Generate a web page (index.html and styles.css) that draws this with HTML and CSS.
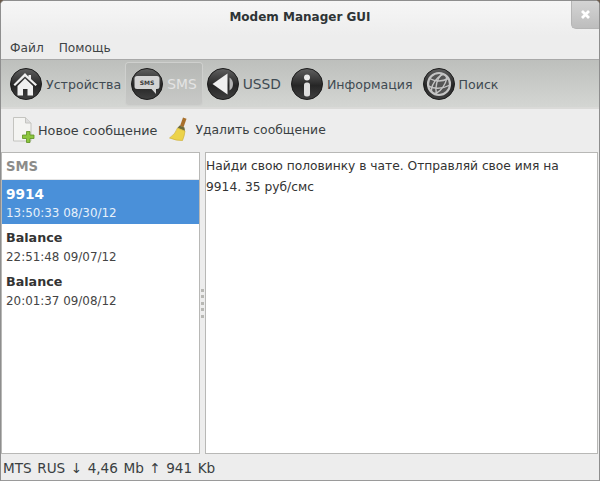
FILE: index.html
```html
<!DOCTYPE html>
<html lang="ru">
<head>
<meta charset="utf-8">
<title>Modem Manager GUI</title>
<link rel="stylesheet" href="styles.css">
</head>
<body>
<div class="window">
  <header class="titlebar">
    <div class="title">Modem Manager GUI</div>
    <div class="close"><svg width="11" height="11" viewBox="0 0 11 11"><path d="M2 2l7 7M9 2l-7 7" stroke="#fff" stroke-width="2.800"/></svg></div>
  </header>
  <nav class="menubar"><span>Файл</span><span>Помощь</span></nav>
  <div class="modes">
    <div class="mode">
      <svg class="ball" viewBox="0 0 32 32"><use href="#disc"/><path d="M15 5L3.500 16.500l1.500 1.500L15 8.500 25.500 18l1.500-1.500L21 11V7h-2.500v1.800z" fill="#f0f0f0"/><path d="M15 10.500L7.500 18v9.500h5.500V21h4.500v6.500H23V18z" fill="#f0f0f0"/></svg>
      <span>Устройства</span>
    </div>
    <div class="mode active">
      <svg class="ball" viewBox="0 0 32 32"><use href="#disc"/><path d="M6 8h20a2.500 2.500 0 0 1 2.500 2.500v8A2.500 2.500 0 0 1 26 21h-1v5l-4.500-5H6a2.500 2.500 0 0 1-2.500-2.500v-8A2.500 2.500 0 0 1 6 8z" fill="#d4d4d4"/><text x="16" y="17" class="smsmark">SMS</text></svg>
      <span>SMS</span>
    </div>
    <div class="mode">
      <svg class="ball" viewBox="0 0 32 32"><use href="#disc"/><path d="M5.500 16L20.500 5.500v21z" fill="#f0f0f0"/><path d="M22.500 9.500q3.500 2 3.500 6.500t-3.500 6.500z" fill="#b4b4b4"/></svg>
      <span>USSD</span>
    </div>
    <div class="mode">
      <svg class="ball" viewBox="0 0 32 32"><use href="#disc"/><circle cx="16" cy="9.500" r="3" fill="#ececec"/><rect x="13" y="14.500" width="6" height="14" rx="2.500" fill="#dedede"/></svg>
      <span>Информация</span>
    </div>
    <div class="mode">
      <svg class="ball" viewBox="0 0 32 32"><use href="#disc"/><circle cx="16" cy="16" r="11" fill="#555" stroke="#c4c4c4" stroke-width="2.200"/><g fill="none" stroke="#c4c4c4" stroke-width="1.400"><ellipse cx="16" cy="16" rx="5" ry="11" transform="rotate(35 16 16)"/><path d="M6.500 10.500q9 5 19 0M5 18q11 5 22-1M19 5.500q-8 9-5.500 21"/></g></svg>
      <span>Поиск</span>
    </div>
  </div>
  <div class="actions">
    <div class="action new">
      <svg width="22" height="26" viewBox="0 0 22 26"><path d="M.5.500h12l5.500 5.500v18H.5z" fill="#f4f4f2" stroke="#c4c4c0"/><path d="M12.500.500V6H18" fill="#ddd" stroke="#c4c4c0"/><path d="M13.500 14.500h3.500v3.500h4v3.500h-4v4h-3.500v-4h-4V18h4z" fill="#8cc63e" stroke="#5d8f22" stroke-width=".8"/></svg>
      <span>Новое сообщение</span>
    </div>
    <div class="action del">
      <svg width="22" height="26" viewBox="0 0 22 26"><path d="M15 .500l3.500 1.300-3 8.500-3.500-1.300z" fill="#a8702c"/><path d="M11.500 8.500l5 2 .5 3.500-7.500-3z" fill="#6e6a3a"/><path d="M9.500 11l7.500 3q-.5 5-2.500 9.500-5.500.5-13-2.500 6-4 8-10z" fill="#ecd34a" stroke="#c9a92a" stroke-width=".6"/></svg>
      <span>Удалить сообщение</span>
    </div>
  </div>
  <main class="panes">
    <section class="list">
      <div class="list-head">SMS</div>
      <div class="row selected"><b class="big">9914</b><small>13:50:33 08/30/12</small></div>
      <div class="row"><b>Balance</b><small>22:51:48 09/07/12</small></div>
      <div class="row"><b>Balance</b><small>20:01:37 09/08/12</small></div>
    </section>
    <div class="grip"><i></i><i></i><i></i><i></i><i></i></div>
    <section class="message">Найди свою половинку в чате. Отправляй свое имя на<br>9914. 35 руб/смс</section>
  </main>
  <footer class="status">MTS RUS ↓ 4,46 Mb ↑ 941 Kb</footer>
</div>
<svg class="defs" width="0" height="0"><defs>
  <linearGradient id="discfill" x1="0" y1="0" x2="0" y2="1"><stop offset="0" stop-color="#606060"/><stop offset=".55" stop-color="#262626"/><stop offset="1" stop-color="#404040"/></linearGradient>
  <symbol id="disc" viewBox="0 0 32 32"><circle cx="16" cy="16" r="15.500" fill="url(#discfill)" stroke="#1c1c1c"/></symbol>
</defs></svg>
</body>
</html>
```
FILE: styles.css
```css
* { box-sizing: border-box; }
html, body { margin: 0; padding: 0; }
body { width: 600px; height: 481px; overflow: hidden; background: #6b5a4a; font-family: "DejaVu Sans", sans-serif; font-size: 12px; color: #3a3a3a; }
.window { width: 600px; height: 481px; display: flex; flex-direction: column; background: #ededed; border: 1px solid #8e8e8e; border-bottom-color: #9a9a9a; border-radius: 5px 5px 0 0; overflow: hidden; }
.titlebar { height: 35px; flex: none; display: flex; justify-content: center; align-items: center; position: relative; background: linear-gradient(#f6f6f6, #ededed); }
.title { font-weight: 700; font-size: 12px; color: #2e3436; margin-top: -4px; }
.close { position: absolute; right: 0; top: 0; width: 28px; height: 28px; background: linear-gradient(#d4d4d4, #bdbdbd); border-left: 1px solid #b5b5b5; border-bottom: 1px solid #b5b5b5; border-bottom-left-radius: 5px; display: flex; align-items: center; justify-content: center; }
.menubar { height: 23px; flex: none; display: flex; gap: 15px; align-items: center; padding: 0 9px; background: #ededed; color: #3f4446; font-size: 12.200px; }
.modes { height: 50px; flex: none; display: flex; align-items: center; padding: 0 0 0 4px; background: linear-gradient(#bdbfbc, #d4d6d3); border-top: 1px solid #a8a8a8; border-bottom: 2px solid #dadad8; color: #3f4a52; font-size: 12.600px; }
.mode { height: 42px; display: flex; align-items: center; gap: 4px; padding: 0 5px; margin-top: 1px; border-radius: 3px; }
.mode:nth-child(3) span { font-size: 13.800px; }
.mode.active { background: linear-gradient(#b6b8b5, #c8c9c7); box-shadow: 0 0 0 1px #cfd0ce; color: #e4e4e4; font-size: 13.800px; }
.ball { width: 32px; height: 32px; flex: none; }
.smsmark { font-family: "DejaVu Sans", sans-serif; font-size: 6px; font-weight: 700; fill: #3a3a3a; text-anchor: middle; }
.actions { height: 43px; flex: none; display: flex; align-items: center; gap: 11px; padding: 0 0 1px 12px; background: #ededed; color: #3a3f42; font-size: 12.750px; }
.action { display: flex; align-items: center; gap: 5px; }
.action.new { gap: 3px; }
.action.del { font-size: 12.350px; }
.panes { flex: 1; display: flex; min-height: 0; }
.list { width: 199px; flex: none; background: #fff; border: 1px solid #b8b8b6; }
.list-head { height: 27px; padding: 0 4px; display: flex; align-items: center; font-weight: 700; font-size: 13.200px; color: #8c8c8a; border-bottom: 1px solid #e6e6e6; }
.row { height: 44px; padding: 6px 4px 0; display: flex; flex-direction: column; gap: 3px; color: #333; }
.row b { font-size: 12.700px; line-height: 16px; }
.row b.big { font-size: 13.700px; }
.row small { font-size: 11.900px; line-height: 16px; color: #444; }
.row.selected { background: #4a90d9; color: #fff; }
.row.selected small { color: #e8f0fa; }
.grip { width: 5px; flex: none; display: flex; flex-direction: column; align-items: center; justify-content: center; gap: 3.500px; }
.grip i { width: 3px; height: 3px; background: #b8b8b4; }
.message { flex: 1; background: #fff; border: 1px solid #b8b8b6; padding: 3px 0 0; line-height: 21px; font-size: 12.250px; color: #333; margin-right: 1px; }
.status { height: 26px; flex: none; padding: 2px 2px 0; display: flex; align-items: center; background: #ededed; color: #3a3f42; font-size: 13.600px; word-spacing: 1.200px; }
.defs { position: absolute; }
```
